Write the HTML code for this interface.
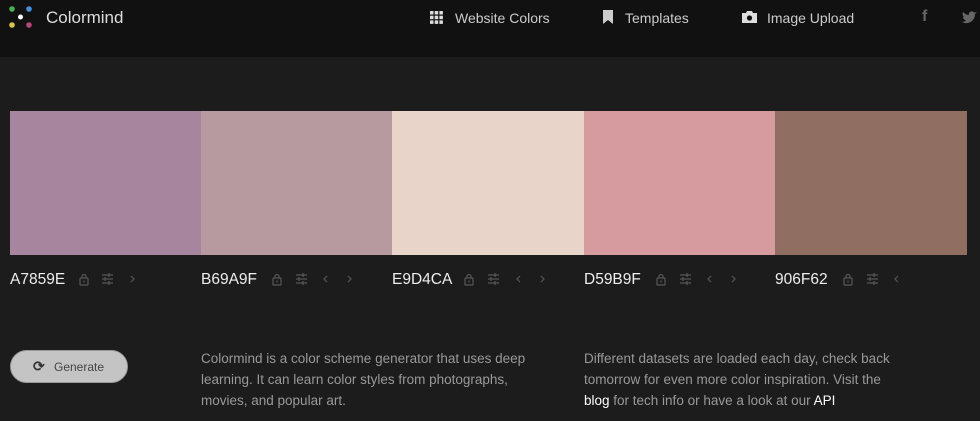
<!DOCTYPE html>
<html><head><style>
body{margin:0;width:980px;height:421px;background:#1c1c1c;font-family:"Liberation Sans",sans-serif;overflow:hidden;position:relative}
.hdr{position:absolute;left:0;top:0;width:980px;height:57px;background:#111}
.t{position:absolute;white-space:nowrap}
.nav{color:#ccc;font-size:14px;top:10px}
.sw{position:absolute;top:111px;height:144px;width:192px}
.hex{position:absolute;top:271px;color:#eee;font-size:15.5px}
.ic{position:absolute;top:273px}
.d{position:absolute;color:#999;font-size:13.5px;line-height:21px;top:348px}
</style></head><body>
<div class="hdr"></div>
<svg style="position:absolute;left:8px;top:5px" width="28" height="28">
<circle cx="4" cy="4" r="2.8" fill="#4caf50"/><circle cx="21" cy="4" r="2.8" fill="#4a90d9"/><circle cx="12.5" cy="12" r="2.5" fill="#fff"/><circle cx="4" cy="20" r="2.8" fill="#d9c44a"/><circle cx="21" cy="20" r="2.8" fill="#b04a7a"/></svg>
<div class="t" style="left:46px;top:8px;color:#ddd;font-size:17px">Colormind</div>
<svg style="position:absolute;left:430px;top:11px" width="13" height="13" fill="#ddd"><rect x="0" y="0" width="3.5" height="3.5"/><rect x="4.7" y="0" width="3.5" height="3.5"/><rect x="9.4" y="0" width="3.5" height="3.5"/><rect x="0" y="4.7" width="3.5" height="3.5"/><rect x="4.7" y="4.7" width="3.5" height="3.5"/><rect x="9.4" y="4.7" width="3.5" height="3.5"/><rect x="0" y="9.4" width="3.5" height="3.5"/><rect x="4.7" y="9.4" width="3.5" height="3.5"/><rect x="9.4" y="9.4" width="3.5" height="3.5"/></svg>
<div class="t nav" style="left:455px">Website Colors</div>
<svg style="position:absolute;left:603px;top:10px" width="10" height="14"><path d="M0 0H10V14L5 10L0 14Z" fill="#ccc"/></svg>
<div class="t nav" style="left:625px">Templates</div>
<svg style="position:absolute;left:742px;top:11px" width="15" height="12"><path d="M0 2H4L5 0H10L11 2H15V12H0Z" fill="#ddd"/><circle cx="7.5" cy="7" r="2.6" fill="#111"/></svg>
<div class="t nav" style="left:767px">Image Upload</div>
<div class="t" style="left:922px;top:8px;color:#666;font-size:16px;font-weight:bold">f</div>
<svg style="position:absolute;left:962px;top:11px" width="15" height="13"><path d="M0 11C5 14 13 11 13 3L15 1L12 1.5C10 -1 6 1 7 4C4 4 2 2 1 1C0 3 1 5 2 6L1 6C1 8 3 9 4 9.5C3 10.5 1 11 0 11Z" fill="#666"/></svg>

<div class="sw" style="left:10px;background:#A7859E"></div>
<div class="sw" style="left:201px;background:#B69A9F"></div>
<div class="sw" style="left:392px;background:#E9D4CA"></div>
<div class="sw" style="left:584px;background:#D59B9F"></div>
<div class="sw" style="left:775px;background:#906F62;width:192px"></div>

<svg width="0" height="0" style="position:absolute"><defs>
<g id="lk"><rect x="1" y="5" width="8" height="7" rx="1" fill="none" stroke="#555" stroke-width="1.3"/><path d="M3 5V3.5a2 2 0 0 1 4 0V5" fill="none" stroke="#555" stroke-width="1.3"/><rect x="4.4" y="7.5" width="1.2" height="2" fill="#555"/></g>
<g id="sl" stroke="#555" stroke-width="1.3"><path d="M0 2H11M0 6H11M0 10H11"/><path d="M7 0V4M3 4V8M7 8V12"/></g>
<path id="rt" d="M1 1L4 4L1 7" fill="none" stroke="#555" stroke-width="1.2"/>
<path id="lt" d="M4 1L1 4L4 7" fill="none" stroke="#555" stroke-width="1.2"/>
</defs></svg>

<div class="hex" style="left:10px">A7859E</div>
<svg class="ic" style="left:79px" width="11" height="13"><use href="#lk"/></svg><svg class="ic" style="left:102px" width="12" height="12"><use href="#sl"/></svg><svg class="ic" style="left:130px;top:275px" width="6" height="8"><use href="#rt"/></svg>
<div class="hex" style="left:201px">B69A9F</div>
<svg class="ic" style="left:272px" width="11" height="13"><use href="#lk"/></svg><svg class="ic" style="left:296px" width="12" height="12"><use href="#sl"/></svg><svg class="ic" style="left:323px;top:275px" width="6" height="8"><use href="#lt"/></svg><svg class="ic" style="left:347px;top:275px" width="6" height="8"><use href="#rt"/></svg>
<div class="hex" style="left:392px">E9D4CA</div>
<svg class="ic" style="left:464px" width="11" height="13"><use href="#lk"/></svg><svg class="ic" style="left:488px" width="12" height="12"><use href="#sl"/></svg><svg class="ic" style="left:516px;top:275px" width="6" height="8"><use href="#lt"/></svg><svg class="ic" style="left:540px;top:275px" width="6" height="8"><use href="#rt"/></svg>
<div class="hex" style="left:584px">D59B9F</div>
<svg class="ic" style="left:656px" width="11" height="13"><use href="#lk"/></svg><svg class="ic" style="left:680px" width="12" height="12"><use href="#sl"/></svg><svg class="ic" style="left:707px;top:275px" width="6" height="8"><use href="#lt"/></svg><svg class="ic" style="left:731px;top:275px" width="6" height="8"><use href="#rt"/></svg>
<div class="hex" style="left:775px">906F62</div>
<svg class="ic" style="left:843px" width="11" height="13"><use href="#lk"/></svg><svg class="ic" style="left:867px" width="12" height="12"><use href="#sl"/></svg><svg class="ic" style="left:894px;top:275px" width="6" height="8"><use href="#lt"/></svg>

<div style="position:absolute;left:10px;top:350px;width:118px;height:33px;border-radius:17px;background:#c4c4c4;border:1px solid #999;box-sizing:border-box"></div>
<div class="t" style="left:33px;top:358px;color:#333;font-size:14px;font-weight:bold">⟳</div>
<div class="t" style="left:54px;top:360px;color:#444;font-size:12px">Generate</div>

<div class="d" style="left:201px;width:345px">Colormind is a color scheme generator that uses deep learning. It can learn color styles from photographs, movies, and popular art.</div>
<div class="d" style="left:584px;width:318px">Different datasets are loaded each day, check back tomorrow for even more color inspiration. Visit the <span style="color:#fff">blog</span> for tech info or have a look at our <span style="color:#fff">API</span></div>
</body></html>
